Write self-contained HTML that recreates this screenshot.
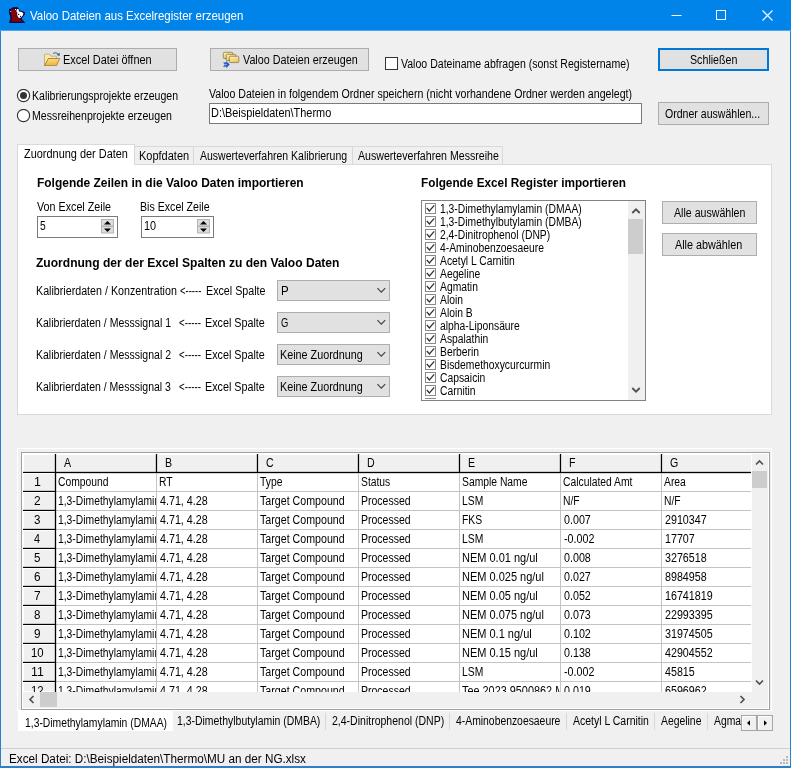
<!DOCTYPE html>
<html lang="de"><head><meta charset="utf-8"><title>Valoo Dateien aus Excelregister erzeugen</title>
<style>
html,body{margin:0;padding:0;}
body{width:791px;height:768px;overflow:hidden;background:#f0f0f0;font-family:"Liberation Sans",sans-serif;color:#000;position:relative;}
#w div,#w span.t,#w svg{position:absolute;box-sizing:border-box;}
#w{position:absolute;left:0;top:0;width:791px;height:768px;overflow:hidden;will-change:transform;}
span.t{white-space:pre;transform-origin:0 0;display:block;}
.btn{background:#e1e1e1;border:1px solid #adadad;}
</style></head><body><div id="w">
<div style="left:0px;top:0px;width:791px;height:30px;background:#0084ea;"></div>
<div style="left:0px;top:30px;width:791px;height:1px;background:#4fa5ee;"></div>
<div style="left:0px;top:31px;width:1px;height:737px;background:#2b80c8;"></div>
<div style="left:790px;top:31px;width:1px;height:737px;background:#2b80c8;"></div>
<div style="left:0px;top:766px;width:791px;height:2px;background:#2b80c8;"></div>
<svg style="left:9px;top:7px" width="16" height="16" viewBox="0 0 16 16">
<path d="M3.8 0.2 L8.2 0.1 L9.8 1.4 L10.4 2.8 L12 3.7 L14.2 4.2 L16 5.3 L15.8 7.6 L14.2 9.4 L12.8 11.6 L13.2 12.4 L16 15.4 L16 16 L0 16 L0 15 L1.3 12.4 L1.3 9.6 L0 6.2 L0 2 L1.8 1.8 L2.8 0.9 Z" fill="#0b0b4a"/>
<path d="M1.9 3 L3.8 2 L6.8 1.9 L7.8 4 L7.8 9 L9.3 11 L11.4 11.8 L11.8 13 L13.4 14.8 L1.9 14.8 L2.9 12.5 L2.9 9 L1.6 6 Z" fill="#820404"/>
<path d="M8 2 L9.5 2 L10 4.5 L13 5 L14.3 6.5 L14 8 L12.6 10 L11 11 L9.2 10.5 L8.2 8 L8.2 5 L7.2 4.4 Z" fill="#fff"/>
<circle cx="9.6" cy="7.4" r="0.65" fill="#111"/><circle cx="11.6" cy="9.4" r="0.65" fill="#111"/>
<rect x="6" y="2" width="1" height="1" fill="#fff"/><rect x="1.2" y="4" width="1" height="1" fill="#f4d0d0"/>
</svg>
<svg style="left:660px;top:0" width="130" height="31" viewBox="0 0 130 31" fill="none" stroke="#fff" stroke-width="1">
<path d="M11.5 15.5 H21.5"/>
<rect x="56.5" y="10.5" width="9" height="9"/>
<path d="M102.5 10.5 L112.5 20.5 M112.5 10.5 L102.5 20.5" stroke-width="1.1"/>
</svg>
<div class="btn" style="left:18px;top:48px;width:159px;height:23px"></div>
<svg style="left:44px;top:52px" width="16" height="14" viewBox="0 0 16 14">
<defs><linearGradient id="gf" x1="0" y1="0" x2="0.3" y2="1"><stop offset="0" stop-color="#fbe391"/><stop offset="1" stop-color="#f2b535"/></linearGradient></defs>
<path d="M0.5 13.2 V3 Q0.5 2.2 1.3 2.2 H5.2 Q5.8 2.2 6.2 2.8 L7 4.2 H11.8 Q12.5 4.2 12.5 5 V6.6 H4.5 L0.8 13.3 Z" fill="#fae9a8" stroke="#b89c58" stroke-width="0.7"/>
<path d="M4.4 6.5 H15.7 L12.5 13.6 H0.6 Z" fill="url(#gf)" stroke="#8f6b26" stroke-width="0.7"/>
<path d="M9.2 1.7 Q11.6 -0.5 14.2 2.2" fill="none" stroke="#44679d" stroke-width="1.1"/>
<path d="M15.9 0.8 L15.6 4 L12.6 2.9 Z" fill="#3f5f94"/>
</svg>
<div class="btn" style="left:210px;top:48px;width:159px;height:23px"></div>
<svg style="left:222px;top:51px" width="18" height="18" viewBox="0 0 18 18">
<defs><linearGradient id="gc" x1="0" y1="0" x2="0.4" y2="1"><stop offset="0" stop-color="#fdf2bd"/><stop offset="1" stop-color="#e6c96e"/></linearGradient></defs>
<g fill="url(#gc)" stroke="#8f7533" stroke-width="0.8">
<rect x="1.3" y="1.3" width="9.4" height="6.2" rx="1"/><rect x="4.2" y="3.3" width="9.6" height="6.2" rx="1"/><rect x="7.4" y="5.2" width="9.4" height="6.4" rx="1"/></g>
<path d="M1 11.2 L4.2 11.6 L4.2 10 L7.8 13.6 L4.2 17.2 L4.2 15.6 L1 16 L2.8 13.6 Z" fill="#2c5cc5"/>
<path d="M3 13 L5.5 13.6 L3 14.4 Z" fill="#8fb4f5"/>
</svg>
<div style="left:385px;top:57px;width:13px;height:13px;background:#fff;border:1px solid #333;"></div>
<div style="left:658px;top:48px;width:111px;height:23px;background:#e1e1e1;border:2px solid #0078d7;"></div>
<svg style="left:16px;top:89px" width="15" height="15" viewBox="0 0 15 15"><circle cx="7.5" cy="6.5" r="6.1" fill="#fff" stroke="#333" stroke-width="1.15"/><circle cx="7.5" cy="6.5" r="3.5" fill="#333"/></svg>
<svg style="left:16px;top:109px" width="15" height="15" viewBox="0 0 15 15"><circle cx="7.5" cy="6.5" r="6.1" fill="#fff" stroke="#333" stroke-width="1.15"/></svg>
<div style="left:209px;top:103px;width:433px;height:21px;background:#fff;border:1px solid #7a7a7a;"></div>
<div class="btn" style="left:658px;top:102px;width:111px;height:23px"></div>
<div style="left:17px;top:164px;width:755px;height:251px;background:#fff;border:1px solid #d9d9d9;"></div>
<div style="left:133px;top:146px;width:61px;height:19px;background:#f0f0f0;border:1px solid #d9d9d9;"></div>
<div style="left:193px;top:146px;width:160px;height:19px;background:#f0f0f0;border:1px solid #d9d9d9;"></div>
<div style="left:352px;top:146px;width:151px;height:19px;background:#f0f0f0;border:1px solid #d9d9d9;"></div>
<div style="left:17px;top:144px;width:118px;height:21px;background:#fff;border:1px solid #d9d9d9;border-bottom:none;"></div>
<div style="left:37px;top:216px;width:81px;height:22px;background:#fff;border:1px solid #7a7a7a;"></div>
<svg style="left:101px;top:219px" width="13" height="15" viewBox="0 0 13 15">
<rect x="0.5" y="0.5" width="12" height="6.5" fill="#ddd" stroke="#b4b4b4"/>
<rect x="0.5" y="7.5" width="12" height="6.5" fill="#ddd" stroke="#b4b4b4"/>
<path d="M3 5.6 L6.5 2 L10 5.6 Z" fill="#000"/><path d="M3 9.4 L6.5 13 L10 9.4 Z" fill="#000"/></svg>
<div style="left:141px;top:216px;width:73px;height:22px;background:#fff;border:1px solid #7a7a7a;"></div>
<svg style="left:197px;top:219px" width="13" height="15" viewBox="0 0 13 15">
<rect x="0.5" y="0.5" width="12" height="6.5" fill="#ddd" stroke="#b4b4b4"/>
<rect x="0.5" y="7.5" width="12" height="6.5" fill="#ddd" stroke="#b4b4b4"/>
<path d="M3 5.6 L6.5 2 L10 5.6 Z" fill="#000"/><path d="M3 9.4 L6.5 13 L10 9.4 Z" fill="#000"/></svg>
<div style="left:277px;top:280px;width:113px;height:21px;background:#e1e1e1;border:1px solid #adadad;"></div>
<svg style="left:376px;top:287px" width="11" height="7" viewBox="0 0 11 7"><path d="M1.4 1.2 L5.3 5.2 L9.2 1.2" fill="none" stroke="#404040" stroke-width="1.15"/></svg>
<div style="left:277px;top:312px;width:113px;height:21px;background:#e1e1e1;border:1px solid #adadad;"></div>
<svg style="left:376px;top:319px" width="11" height="7" viewBox="0 0 11 7"><path d="M1.4 1.2 L5.3 5.2 L9.2 1.2" fill="none" stroke="#404040" stroke-width="1.15"/></svg>
<div style="left:277px;top:344px;width:113px;height:21px;background:#e1e1e1;border:1px solid #adadad;"></div>
<svg style="left:376px;top:351px" width="11" height="7" viewBox="0 0 11 7"><path d="M1.4 1.2 L5.3 5.2 L9.2 1.2" fill="none" stroke="#404040" stroke-width="1.15"/></svg>
<div style="left:277px;top:376px;width:113px;height:21px;background:#e1e1e1;border:1px solid #adadad;"></div>
<svg style="left:376px;top:383px" width="11" height="7" viewBox="0 0 11 7"><path d="M1.4 1.2 L5.3 5.2 L9.2 1.2" fill="none" stroke="#404040" stroke-width="1.15"/></svg>
<div style="left:421px;top:200px;width:225px;height:201px;background:#fff;border:1px solid #828282;"></div>
<svg style="left:425px;top:203px" width="11" height="11" viewBox="0 0 11 11"><rect x="0.5" y="0.5" width="10" height="10" fill="#fff" stroke="#8a8a8a"/><path d="M1.8 5 L4.4 7.9 L9.2 2.4" fill="none" stroke="#333" stroke-width="1.3"/></svg>
<svg style="left:425px;top:216px" width="11" height="11" viewBox="0 0 11 11"><rect x="0.5" y="0.5" width="10" height="10" fill="#fff" stroke="#8a8a8a"/><path d="M1.8 5 L4.4 7.9 L9.2 2.4" fill="none" stroke="#333" stroke-width="1.3"/></svg>
<svg style="left:425px;top:229px" width="11" height="11" viewBox="0 0 11 11"><rect x="0.5" y="0.5" width="10" height="10" fill="#fff" stroke="#8a8a8a"/><path d="M1.8 5 L4.4 7.9 L9.2 2.4" fill="none" stroke="#333" stroke-width="1.3"/></svg>
<svg style="left:425px;top:242px" width="11" height="11" viewBox="0 0 11 11"><rect x="0.5" y="0.5" width="10" height="10" fill="#fff" stroke="#8a8a8a"/><path d="M1.8 5 L4.4 7.9 L9.2 2.4" fill="none" stroke="#333" stroke-width="1.3"/></svg>
<svg style="left:425px;top:255px" width="11" height="11" viewBox="0 0 11 11"><rect x="0.5" y="0.5" width="10" height="10" fill="#fff" stroke="#8a8a8a"/><path d="M1.8 5 L4.4 7.9 L9.2 2.4" fill="none" stroke="#333" stroke-width="1.3"/></svg>
<svg style="left:425px;top:268px" width="11" height="11" viewBox="0 0 11 11"><rect x="0.5" y="0.5" width="10" height="10" fill="#fff" stroke="#8a8a8a"/><path d="M1.8 5 L4.4 7.9 L9.2 2.4" fill="none" stroke="#333" stroke-width="1.3"/></svg>
<svg style="left:425px;top:281px" width="11" height="11" viewBox="0 0 11 11"><rect x="0.5" y="0.5" width="10" height="10" fill="#fff" stroke="#8a8a8a"/><path d="M1.8 5 L4.4 7.9 L9.2 2.4" fill="none" stroke="#333" stroke-width="1.3"/></svg>
<svg style="left:425px;top:294px" width="11" height="11" viewBox="0 0 11 11"><rect x="0.5" y="0.5" width="10" height="10" fill="#fff" stroke="#8a8a8a"/><path d="M1.8 5 L4.4 7.9 L9.2 2.4" fill="none" stroke="#333" stroke-width="1.3"/></svg>
<svg style="left:425px;top:307px" width="11" height="11" viewBox="0 0 11 11"><rect x="0.5" y="0.5" width="10" height="10" fill="#fff" stroke="#8a8a8a"/><path d="M1.8 5 L4.4 7.9 L9.2 2.4" fill="none" stroke="#333" stroke-width="1.3"/></svg>
<svg style="left:425px;top:320px" width="11" height="11" viewBox="0 0 11 11"><rect x="0.5" y="0.5" width="10" height="10" fill="#fff" stroke="#8a8a8a"/><path d="M1.8 5 L4.4 7.9 L9.2 2.4" fill="none" stroke="#333" stroke-width="1.3"/></svg>
<svg style="left:425px;top:333px" width="11" height="11" viewBox="0 0 11 11"><rect x="0.5" y="0.5" width="10" height="10" fill="#fff" stroke="#8a8a8a"/><path d="M1.8 5 L4.4 7.9 L9.2 2.4" fill="none" stroke="#333" stroke-width="1.3"/></svg>
<svg style="left:425px;top:346px" width="11" height="11" viewBox="0 0 11 11"><rect x="0.5" y="0.5" width="10" height="10" fill="#fff" stroke="#8a8a8a"/><path d="M1.8 5 L4.4 7.9 L9.2 2.4" fill="none" stroke="#333" stroke-width="1.3"/></svg>
<svg style="left:425px;top:359px" width="11" height="11" viewBox="0 0 11 11"><rect x="0.5" y="0.5" width="10" height="10" fill="#fff" stroke="#8a8a8a"/><path d="M1.8 5 L4.4 7.9 L9.2 2.4" fill="none" stroke="#333" stroke-width="1.3"/></svg>
<svg style="left:425px;top:372px" width="11" height="11" viewBox="0 0 11 11"><rect x="0.5" y="0.5" width="10" height="10" fill="#fff" stroke="#8a8a8a"/><path d="M1.8 5 L4.4 7.9 L9.2 2.4" fill="none" stroke="#333" stroke-width="1.3"/></svg>
<svg style="left:425px;top:385px" width="11" height="11" viewBox="0 0 11 11"><rect x="0.5" y="0.5" width="10" height="10" fill="#fff" stroke="#8a8a8a"/><path d="M1.8 5 L4.4 7.9 L9.2 2.4" fill="none" stroke="#333" stroke-width="1.3"/></svg>
<div style="left:425px;top:398px;width:11px;height:1px;background:#8a8a8a;"></div>
<div style="left:628px;top:201px;width:17px;height:199px;background:#f0f0f0;"></div>
<div style="left:628px;top:219px;width:15px;height:35px;background:#cdcdcd;"></div>
<svg style="left:631px;top:207px" width="10" height="8" viewBox="0 0 10 8"><path d="M1.3 6 L5 2.3 L8.7 6" fill="none" stroke="#505050" stroke-width="1.8"/></svg>
<svg style="left:631px;top:386px" width="10" height="8" viewBox="0 0 10 8"><path d="M1.3 2 L5 5.7 L8.7 2" fill="none" stroke="#505050" stroke-width="1.8"/></svg>
<div class="btn" style="left:662px;top:201px;width:95px;height:23px"></div>
<div class="btn" style="left:662px;top:233px;width:95px;height:23px"></div>
<div style="left:17px;top:448px;width:755px;height:263px;background:#f0f0f0;border:1px solid #fff;"></div>
<div style="left:21px;top:452px;width:749px;height:258px;background:#fff;border:1px solid #a0a0a0;"></div>
<div style="left:23px;top:454px;width:728px;height:18px;background:#f0f0f0;"></div>
<div style="left:23px;top:454px;width:32px;height:237px;background:#f0f0f0;"></div>
<div style="left:23px;top:454px;width:32px;height:1px;background:#fff;"></div>
<div style="left:23px;top:454px;width:1px;height:18px;background:#fff;"></div>
<div style="left:56px;top:454px;width:100px;height:1px;background:#fff;"></div>
<div style="left:56px;top:454px;width:1px;height:18px;background:#fff;"></div>
<div style="left:157px;top:454px;width:100px;height:1px;background:#fff;"></div>
<div style="left:157px;top:454px;width:1px;height:18px;background:#fff;"></div>
<div style="left:258px;top:454px;width:100px;height:1px;background:#fff;"></div>
<div style="left:258px;top:454px;width:1px;height:18px;background:#fff;"></div>
<div style="left:359px;top:454px;width:100px;height:1px;background:#fff;"></div>
<div style="left:359px;top:454px;width:1px;height:18px;background:#fff;"></div>
<div style="left:460px;top:454px;width:100px;height:1px;background:#fff;"></div>
<div style="left:460px;top:454px;width:1px;height:18px;background:#fff;"></div>
<div style="left:561px;top:454px;width:100px;height:1px;background:#fff;"></div>
<div style="left:561px;top:454px;width:1px;height:18px;background:#fff;"></div>
<div style="left:662px;top:454px;width:89px;height:1px;background:#fff;"></div>
<div style="left:662px;top:454px;width:1px;height:18px;background:#fff;"></div>
<div style="left:54px;top:454px;width:3px;height:19px;background:rgba(0,0,0,0.16);"></div>
<div style="left:55px;top:454px;width:1px;height:19px;background:#000;"></div>
<div style="left:155px;top:454px;width:3px;height:19px;background:rgba(0,0,0,0.16);"></div>
<div style="left:156px;top:454px;width:1px;height:19px;background:#000;"></div>
<div style="left:256px;top:454px;width:3px;height:19px;background:rgba(0,0,0,0.16);"></div>
<div style="left:257px;top:454px;width:1px;height:19px;background:#000;"></div>
<div style="left:357px;top:454px;width:3px;height:19px;background:rgba(0,0,0,0.16);"></div>
<div style="left:358px;top:454px;width:1px;height:19px;background:#000;"></div>
<div style="left:458px;top:454px;width:3px;height:19px;background:rgba(0,0,0,0.16);"></div>
<div style="left:459px;top:454px;width:1px;height:19px;background:#000;"></div>
<div style="left:559px;top:454px;width:3px;height:19px;background:rgba(0,0,0,0.16);"></div>
<div style="left:560px;top:454px;width:1px;height:19px;background:#000;"></div>
<div style="left:660px;top:454px;width:3px;height:19px;background:rgba(0,0,0,0.16);"></div>
<div style="left:661px;top:454px;width:1px;height:19px;background:#000;"></div>
<div style="left:23px;top:471px;width:728px;height:3px;background:rgba(0,0,0,0.16);"></div>
<div style="left:23px;top:472px;width:728px;height:1px;background:#000;"></div>
<div style="left:23px;top:473px;width:32px;height:1px;background:#fff;"></div>
<div style="left:23px;top:473px;width:1px;height:18px;background:#fff;"></div>
<div style="left:56px;top:491px;width:695px;height:1px;background:#c4c4c4;"></div>
<div style="left:23px;top:490px;width:33px;height:3px;background:rgba(0,0,0,0.16);"></div>
<div style="left:23px;top:491px;width:33px;height:1px;background:#000;"></div>
<div style="left:23px;top:492px;width:32px;height:1px;background:#fff;"></div>
<div style="left:23px;top:492px;width:1px;height:18px;background:#fff;"></div>
<div style="left:56px;top:510px;width:695px;height:1px;background:#c4c4c4;"></div>
<div style="left:23px;top:509px;width:33px;height:3px;background:rgba(0,0,0,0.16);"></div>
<div style="left:23px;top:510px;width:33px;height:1px;background:#000;"></div>
<div style="left:23px;top:511px;width:32px;height:1px;background:#fff;"></div>
<div style="left:23px;top:511px;width:1px;height:18px;background:#fff;"></div>
<div style="left:56px;top:529px;width:695px;height:1px;background:#c4c4c4;"></div>
<div style="left:23px;top:528px;width:33px;height:3px;background:rgba(0,0,0,0.16);"></div>
<div style="left:23px;top:529px;width:33px;height:1px;background:#000;"></div>
<div style="left:23px;top:530px;width:32px;height:1px;background:#fff;"></div>
<div style="left:23px;top:530px;width:1px;height:18px;background:#fff;"></div>
<div style="left:56px;top:548px;width:695px;height:1px;background:#c4c4c4;"></div>
<div style="left:23px;top:547px;width:33px;height:3px;background:rgba(0,0,0,0.16);"></div>
<div style="left:23px;top:548px;width:33px;height:1px;background:#000;"></div>
<div style="left:23px;top:549px;width:32px;height:1px;background:#fff;"></div>
<div style="left:23px;top:549px;width:1px;height:18px;background:#fff;"></div>
<div style="left:56px;top:567px;width:695px;height:1px;background:#c4c4c4;"></div>
<div style="left:23px;top:566px;width:33px;height:3px;background:rgba(0,0,0,0.16);"></div>
<div style="left:23px;top:567px;width:33px;height:1px;background:#000;"></div>
<div style="left:23px;top:568px;width:32px;height:1px;background:#fff;"></div>
<div style="left:23px;top:568px;width:1px;height:18px;background:#fff;"></div>
<div style="left:56px;top:586px;width:695px;height:1px;background:#c4c4c4;"></div>
<div style="left:23px;top:585px;width:33px;height:3px;background:rgba(0,0,0,0.16);"></div>
<div style="left:23px;top:586px;width:33px;height:1px;background:#000;"></div>
<div style="left:23px;top:587px;width:32px;height:1px;background:#fff;"></div>
<div style="left:23px;top:587px;width:1px;height:18px;background:#fff;"></div>
<div style="left:56px;top:605px;width:695px;height:1px;background:#c4c4c4;"></div>
<div style="left:23px;top:604px;width:33px;height:3px;background:rgba(0,0,0,0.16);"></div>
<div style="left:23px;top:605px;width:33px;height:1px;background:#000;"></div>
<div style="left:23px;top:606px;width:32px;height:1px;background:#fff;"></div>
<div style="left:23px;top:606px;width:1px;height:18px;background:#fff;"></div>
<div style="left:56px;top:624px;width:695px;height:1px;background:#c4c4c4;"></div>
<div style="left:23px;top:623px;width:33px;height:3px;background:rgba(0,0,0,0.16);"></div>
<div style="left:23px;top:624px;width:33px;height:1px;background:#000;"></div>
<div style="left:23px;top:625px;width:32px;height:1px;background:#fff;"></div>
<div style="left:23px;top:625px;width:1px;height:18px;background:#fff;"></div>
<div style="left:56px;top:643px;width:695px;height:1px;background:#c4c4c4;"></div>
<div style="left:23px;top:642px;width:33px;height:3px;background:rgba(0,0,0,0.16);"></div>
<div style="left:23px;top:643px;width:33px;height:1px;background:#000;"></div>
<div style="left:23px;top:644px;width:32px;height:1px;background:#fff;"></div>
<div style="left:23px;top:644px;width:1px;height:18px;background:#fff;"></div>
<div style="left:56px;top:662px;width:695px;height:1px;background:#c4c4c4;"></div>
<div style="left:23px;top:661px;width:33px;height:3px;background:rgba(0,0,0,0.16);"></div>
<div style="left:23px;top:662px;width:33px;height:1px;background:#000;"></div>
<div style="left:23px;top:663px;width:32px;height:1px;background:#fff;"></div>
<div style="left:23px;top:663px;width:1px;height:18px;background:#fff;"></div>
<div style="left:56px;top:681px;width:695px;height:1px;background:#c4c4c4;"></div>
<div style="left:23px;top:680px;width:33px;height:3px;background:rgba(0,0,0,0.16);"></div>
<div style="left:23px;top:681px;width:33px;height:1px;background:#000;"></div>
<div style="left:23px;top:682px;width:32px;height:1px;background:#fff;"></div>
<div style="left:23px;top:682px;width:1px;height:10px;background:#fff;"></div>
<div style="left:54px;top:473px;width:3px;height:219px;background:rgba(0,0,0,0.16);"></div>
<div style="left:55px;top:473px;width:1px;height:219px;background:#000;"></div>
<div style="left:156px;top:473px;width:1px;height:219px;background:#c4c4c4;"></div>
<div style="left:257px;top:473px;width:1px;height:219px;background:#c4c4c4;"></div>
<div style="left:358px;top:473px;width:1px;height:219px;background:#c4c4c4;"></div>
<div style="left:459px;top:473px;width:1px;height:219px;background:#c4c4c4;"></div>
<div style="left:560px;top:473px;width:1px;height:219px;background:#c4c4c4;"></div>
<div style="left:661px;top:473px;width:1px;height:219px;background:#c4c4c4;"></div>
<div style="left:752px;top:454px;width:16px;height:238px;background:#f0f0f0;"></div>
<div style="left:752px;top:471px;width:15px;height:17px;background:#cdcdcd;"></div>
<svg style="left:755px;top:459px" width="9" height="7" viewBox="0 0 9 7"><path d="M1 5.5 L4.5 2 L8 5.5" fill="none" stroke="#505050" stroke-width="1.7"/></svg>
<svg style="left:755px;top:679px" width="9" height="7" viewBox="0 0 9 7"><path d="M1 1.5 L4.5 5 L8 1.5" fill="none" stroke="#505050" stroke-width="1.7"/></svg>
<div style="left:23px;top:692px;width:745px;height:16px;background:#f0f0f0;"></div>
<div style="left:40px;top:692px;width:17px;height:15px;background:#cdcdcd;"></div>
<svg style="left:28px;top:695px" width="7" height="9" viewBox="0 0 7 9"><path d="M5.5 1 L2 4.5 L5.5 8" fill="none" stroke="#505050" stroke-width="1.7"/></svg>
<svg style="left:739px;top:695px" width="7" height="9" viewBox="0 0 7 9"><path d="M1.5 1 L5 4.5 L1.5 8" fill="none" stroke="#505050" stroke-width="1.7"/></svg>
<div style="left:18px;top:711px;width:155px;height:20px;background:#fff;"></div>
<div style="left:325px;top:713px;width:1px;height:17px;background:#d9d9d9;"></div>
<div style="left:449px;top:713px;width:1px;height:17px;background:#d9d9d9;"></div>
<div style="left:566px;top:713px;width:1px;height:17px;background:#d9d9d9;"></div>
<div style="left:654px;top:713px;width:1px;height:17px;background:#d9d9d9;"></div>
<div style="left:707px;top:713px;width:1px;height:17px;background:#d9d9d9;"></div>
<svg style="left:741px;top:715px" width="16" height="16" viewBox="0 0 16 16"><rect x="0.5" y="0.5" width="15" height="15" fill="#f0f0f0" stroke="#a6a6a6"/><path d="M1.5 14 V1.5 H14" fill="none" stroke="#fff"/><path d="M9 5.2 L6 8 L9 10.8 Z" fill="#000"/></svg>
<svg style="left:757px;top:715px" width="16" height="16" viewBox="0 0 16 16"><rect x="0.5" y="0.5" width="15" height="15" fill="#f0f0f0" stroke="#a6a6a6"/><path d="M1.5 14 V1.5 H14" fill="none" stroke="#fff"/><path d="M7 5.2 L10 8 L7 10.8 Z" fill="#000"/></svg>
<div style="left:1px;top:748px;width:789px;height:1px;background:#d0d0d0;"></div>
<svg style="left:777px;top:755px" width="12" height="12" viewBox="0 0 12 12" fill="#b8b8b8"><rect x="9" y="1" width="2" height="2"/><rect x="6" y="4" width="2" height="2"/><rect x="9" y="4" width="2" height="2"/><rect x="3" y="7" width="2" height="2"/><rect x="6" y="7" width="2" height="2"/><rect x="9" y="7" width="2" height="2"/></svg>
<span class="t" style="left:29.60px;top:9px;font-size:12px;line-height:14px;transform:scaleX(0.9557);color:#fff;">Valoo Dateien aus Excelregister erzeugen</span>
<span class="t" style="left:63.32px;top:53px;font-size:12.5px;line-height:14px;transform:scaleX(0.8758);">Excel Datei öffnen</span>
<span class="t" style="left:242.61px;top:53px;font-size:12.5px;line-height:14px;transform:scaleX(0.8605);">Valoo Dateien erzeugen</span>
<span class="t" style="left:400.92px;top:57px;font-size:12.5px;line-height:14px;transform:scaleX(0.8442);">Valoo Dateiname abfragen (sonst Registername)</span>
<span class="t" style="left:689.59px;top:53px;font-size:12.5px;line-height:14px;transform:scaleX(0.8533);">Schließen</span>
<span class="t" style="left:32.46px;top:89px;font-size:12.5px;line-height:14px;transform:scaleX(0.8438);">Kalibrierungsprojekte erzeugen</span>
<span class="t" style="left:32.45px;top:109px;font-size:12.5px;line-height:14px;transform:scaleX(0.8499);">Messreihenprojekte erzeugen</span>
<span class="t" style="left:209.22px;top:87px;font-size:12.5px;line-height:14px;transform:scaleX(0.8484);">Valoo Dateien in folgendem Ordner speichern (nicht vorhandene Ordner werden angelegt)</span>
<span class="t" style="left:211.43px;top:106px;font-size:12.5px;line-height:14px;transform:scaleX(0.8740);">D:\Beispieldaten\Thermo</span>
<span class="t" style="left:665.49px;top:107px;font-size:12.5px;line-height:14px;transform:scaleX(0.8452);">Ordner auswählen...</span>
<span class="t" style="left:24.25px;top:147px;font-size:12.5px;line-height:14px;transform:scaleX(0.8746);">Zuordnung der Daten</span>
<span class="t" style="left:139.22px;top:149px;font-size:12.5px;line-height:14px;transform:scaleX(0.8795);">Kopfdaten</span>
<span class="t" style="left:200.20px;top:149px;font-size:12.5px;line-height:14px;transform:scaleX(0.8402);">Auswerteverfahren Kalibrierung</span>
<span class="t" style="left:357.90px;top:149px;font-size:12.5px;line-height:14px;transform:scaleX(0.8480);">Auswerteverfahren Messreihe</span>
<span class="t" style="left:36.93px;top:176px;font-size:12.5px;line-height:14px;transform:scaleX(0.9572);font-weight:bold;">Folgende Zeilen in die Valoo Daten importieren</span>
<span class="t" style="left:420.55px;top:176px;font-size:12.5px;line-height:14px;transform:scaleX(0.9428);font-weight:bold;">Folgende Excel Register importieren</span>
<span class="t" style="left:37.01px;top:200px;font-size:12.5px;line-height:14px;transform:scaleX(0.8591);">Von Excel Zeile</span>
<span class="t" style="left:140.25px;top:200px;font-size:12.5px;line-height:14px;transform:scaleX(0.8489);">Bis Excel Zeile</span>
<span class="t" style="left:40.29px;top:219px;font-size:12.5px;line-height:14px;transform:scaleX(0.8220);">5</span>
<span class="t" style="left:143.92px;top:219px;font-size:12.5px;line-height:14px;transform:scaleX(0.8680);">10</span>
<span class="t" style="left:36.31px;top:256px;font-size:12.5px;line-height:14px;transform:scaleX(0.9644);font-weight:bold;">Zuordnung der der Excel Spalten zu den Valoo Daten</span>
<span class="t" style="left:36.24px;top:284px;font-size:12.5px;line-height:14px;transform:scaleX(0.8554);">Kalibrierdaten / Konzentration</span>
<span class="t" style="left:179.85px;top:284px;font-size:12.5px;line-height:14px;transform:scaleX(0.7574);">&lt;-----</span>
<span class="t" style="left:206.44px;top:284px;font-size:12.5px;line-height:14px;transform:scaleX(0.8564);">Excel Spalte</span>
<span class="t" style="left:280.78px;top:284px;font-size:12.5px;line-height:14px;transform:scaleX(0.9179);">P</span>
<span class="t" style="left:36.26px;top:316px;font-size:12.5px;line-height:14px;transform:scaleX(0.8411);">Kalibrierdaten / Messsignal 1</span>
<span class="t" style="left:178.73px;top:316px;font-size:12.5px;line-height:14px;transform:scaleX(0.7796);">&lt;-----</span>
<span class="t" style="left:205.14px;top:316px;font-size:12.5px;line-height:14px;transform:scaleX(0.8608);">Excel Spalte</span>
<span class="t" style="left:281.25px;top:316px;font-size:12.5px;line-height:14px;transform:scaleX(0.7500);">G</span>
<span class="t" style="left:36.26px;top:348px;font-size:12.5px;line-height:14px;transform:scaleX(0.8411);">Kalibrierdaten / Messsignal 2</span>
<span class="t" style="left:178.73px;top:348px;font-size:12.5px;line-height:14px;transform:scaleX(0.7796);">&lt;-----</span>
<span class="t" style="left:205.14px;top:348px;font-size:12.5px;line-height:14px;transform:scaleX(0.8608);">Excel Spalte</span>
<span class="t" style="left:280.24px;top:348px;font-size:12.5px;line-height:14px;transform:scaleX(0.8624);">Keine Zuordnung</span>
<span class="t" style="left:36.26px;top:380px;font-size:12.5px;line-height:14px;transform:scaleX(0.8406);">Kalibrierdaten / Messsignal 3</span>
<span class="t" style="left:178.73px;top:380px;font-size:12.5px;line-height:14px;transform:scaleX(0.7796);">&lt;-----</span>
<span class="t" style="left:205.14px;top:380px;font-size:12.5px;line-height:14px;transform:scaleX(0.8608);">Excel Spalte</span>
<span class="t" style="left:280.24px;top:380px;font-size:12.5px;line-height:14px;transform:scaleX(0.8624);">Keine Zuordnung</span>
<span class="t" style="left:439.60px;top:202px;font-size:12.5px;line-height:14px;transform:scaleX(0.8260);">1,3-Dimethylamylamin (DMAA)</span>
<span class="t" style="left:439.60px;top:215px;font-size:12.5px;line-height:14px;transform:scaleX(0.8260);">1,3-Dimethylbutylamin (DMBA)</span>
<span class="t" style="left:439.60px;top:228px;font-size:12.5px;line-height:14px;transform:scaleX(0.8260);">2,4-Dinitrophenol (DNP)</span>
<span class="t" style="left:439.60px;top:241px;font-size:12.5px;line-height:14px;transform:scaleX(0.8260);">4-Aminobenzoesaeure</span>
<span class="t" style="left:439.60px;top:254px;font-size:12.5px;line-height:14px;transform:scaleX(0.8260);">Acetyl L Carnitin</span>
<span class="t" style="left:439.60px;top:267px;font-size:12.5px;line-height:14px;transform:scaleX(0.8260);">Aegeline</span>
<span class="t" style="left:439.60px;top:280px;font-size:12.5px;line-height:14px;transform:scaleX(0.8260);">Agmatin</span>
<span class="t" style="left:439.60px;top:293px;font-size:12.5px;line-height:14px;transform:scaleX(0.8260);">Aloin</span>
<span class="t" style="left:439.60px;top:306px;font-size:12.5px;line-height:14px;transform:scaleX(0.8260);">Aloin B</span>
<span class="t" style="left:439.60px;top:319px;font-size:12.5px;line-height:14px;transform:scaleX(0.8260);">alpha-Liponsäure</span>
<span class="t" style="left:439.60px;top:332px;font-size:12.5px;line-height:14px;transform:scaleX(0.8260);">Aspalathin</span>
<span class="t" style="left:439.60px;top:345px;font-size:12.5px;line-height:14px;transform:scaleX(0.8260);">Berberin</span>
<span class="t" style="left:439.60px;top:358px;font-size:12.5px;line-height:14px;transform:scaleX(0.8260);">Bisdemethoxycurcurmin</span>
<span class="t" style="left:439.60px;top:371px;font-size:12.5px;line-height:14px;transform:scaleX(0.8260);">Capsaicin</span>
<span class="t" style="left:439.60px;top:384px;font-size:12.5px;line-height:14px;transform:scaleX(0.8260);">Carnitin</span>
<span class="t" style="left:673.70px;top:206px;font-size:12.5px;line-height:14px;transform:scaleX(0.8493);">Alle auswählen</span>
<span class="t" style="left:675.40px;top:238px;font-size:12.5px;line-height:14px;transform:scaleX(0.8643);">Alle abwählen</span>
<span class="t" style="left:64.00px;top:456px;font-size:12.5px;line-height:14px;transform:scaleX(0.8500);">A</span>
<span class="t" style="left:165.00px;top:456px;font-size:12.5px;line-height:14px;transform:scaleX(0.8500);">B</span>
<span class="t" style="left:266.00px;top:456px;font-size:12.5px;line-height:14px;transform:scaleX(0.8500);">C</span>
<span class="t" style="left:367.00px;top:456px;font-size:12.5px;line-height:14px;transform:scaleX(0.8500);">D</span>
<span class="t" style="left:468.00px;top:456px;font-size:12.5px;line-height:14px;transform:scaleX(0.8500);">E</span>
<span class="t" style="left:569.00px;top:456px;font-size:12.5px;line-height:14px;transform:scaleX(0.8500);">F</span>
<span class="t" style="left:670.00px;top:456px;font-size:12.5px;line-height:14px;transform:scaleX(0.8500);">G</span>
<span class="t" style="left:33.86px;top:475px;font-size:12.5px;line-height:14px;transform:scaleX(0.9909);">1</span>
<div style="left:56px;top:473px;width:100px;height:18px;overflow:hidden"><span class="t" style="left:2.00px;top:2px;font-size:12.5px;line-height:14px;transform:scaleX(0.8260);">Compound</span></div>
<div style="left:157px;top:473px;width:100px;height:18px;overflow:hidden"><span class="t" style="left:2.00px;top:2px;font-size:12.5px;line-height:14px;transform:scaleX(0.8260);">RT</span></div>
<div style="left:258px;top:473px;width:100px;height:18px;overflow:hidden"><span class="t" style="left:2.00px;top:2px;font-size:12.5px;line-height:14px;transform:scaleX(0.8260);">Type</span></div>
<div style="left:359px;top:473px;width:100px;height:18px;overflow:hidden"><span class="t" style="left:2.00px;top:2px;font-size:12.5px;line-height:14px;transform:scaleX(0.8260);">Status</span></div>
<div style="left:460px;top:473px;width:100px;height:18px;overflow:hidden"><span class="t" style="left:2.00px;top:2px;font-size:12.5px;line-height:14px;transform:scaleX(0.8260);">Sample Name</span></div>
<div style="left:561px;top:473px;width:100px;height:18px;overflow:hidden"><span class="t" style="left:2.00px;top:2px;font-size:12.5px;line-height:14px;transform:scaleX(0.8260);">Calculated Amt</span></div>
<div style="left:662px;top:473px;width:89px;height:18px;overflow:hidden"><span class="t" style="left:2.00px;top:2px;font-size:12.5px;line-height:14px;transform:scaleX(0.8260);">Area</span></div>
<span class="t" style="left:34.18px;top:494px;font-size:12.5px;line-height:14px;transform:scaleX(0.9561);">2</span>
<div style="left:56px;top:492px;width:100px;height:18px;overflow:hidden"><span class="t" style="left:2.00px;top:2px;font-size:12.5px;line-height:14px;transform:scaleX(0.8260);">1,3-Dimethylamylamin (DMAA)</span></div>
<div style="left:157px;top:492px;width:100px;height:18px;overflow:hidden"><span class="t" style="left:2.60px;top:2px;font-size:12.5px;line-height:14px;transform:scaleX(0.8570);">4.71, 4.28</span></div>
<div style="left:258px;top:492px;width:100px;height:18px;overflow:hidden"><span class="t" style="left:2.00px;top:2px;font-size:12.5px;line-height:14px;transform:scaleX(0.8520);">Target Compound</span></div>
<div style="left:359px;top:492px;width:100px;height:18px;overflow:hidden"><span class="t" style="left:2.00px;top:2px;font-size:12.5px;line-height:14px;transform:scaleX(0.8400);">Processed</span></div>
<div style="left:460px;top:492px;width:100px;height:18px;overflow:hidden"><span class="t" style="left:2.00px;top:2px;font-size:12.5px;line-height:14px;transform:scaleX(0.8260);">LSM</span></div>
<div style="left:561px;top:492px;width:100px;height:18px;overflow:hidden"><span class="t" style="left:2.00px;top:2px;font-size:12.5px;line-height:14px;transform:scaleX(0.8260);">N/F</span></div>
<div style="left:662px;top:492px;width:89px;height:18px;overflow:hidden"><span class="t" style="left:2.00px;top:2px;font-size:12.5px;line-height:14px;transform:scaleX(0.8260);">N/F</span></div>
<span class="t" style="left:34.29px;top:513px;font-size:12.5px;line-height:14px;transform:scaleX(0.9237);">3</span>
<div style="left:56px;top:511px;width:100px;height:18px;overflow:hidden"><span class="t" style="left:2.00px;top:2px;font-size:12.5px;line-height:14px;transform:scaleX(0.8260);">1,3-Dimethylamylamin (DMAA)</span></div>
<div style="left:157px;top:511px;width:100px;height:18px;overflow:hidden"><span class="t" style="left:2.60px;top:2px;font-size:12.5px;line-height:14px;transform:scaleX(0.8570);">4.71, 4.28</span></div>
<div style="left:258px;top:511px;width:100px;height:18px;overflow:hidden"><span class="t" style="left:2.00px;top:2px;font-size:12.5px;line-height:14px;transform:scaleX(0.8520);">Target Compound</span></div>
<div style="left:359px;top:511px;width:100px;height:18px;overflow:hidden"><span class="t" style="left:2.00px;top:2px;font-size:12.5px;line-height:14px;transform:scaleX(0.8400);">Processed</span></div>
<div style="left:460px;top:511px;width:100px;height:18px;overflow:hidden"><span class="t" style="left:2.00px;top:2px;font-size:12.5px;line-height:14px;transform:scaleX(0.8260);">FKS</span></div>
<div style="left:561px;top:511px;width:100px;height:18px;overflow:hidden"><span class="t" style="left:2.60px;top:2px;font-size:12.5px;line-height:14px;transform:scaleX(0.8570);">0.007</span></div>
<div style="left:662px;top:511px;width:89px;height:18px;overflow:hidden"><span class="t" style="left:2.60px;top:2px;font-size:12.5px;line-height:14px;transform:scaleX(0.8570);">2910347</span></div>
<span class="t" style="left:34.49px;top:532px;font-size:12.5px;line-height:14px;transform:scaleX(0.8651);">4</span>
<div style="left:56px;top:530px;width:100px;height:18px;overflow:hidden"><span class="t" style="left:2.00px;top:2px;font-size:12.5px;line-height:14px;transform:scaleX(0.8260);">1,3-Dimethylamylamin (DMAA)</span></div>
<div style="left:157px;top:530px;width:100px;height:18px;overflow:hidden"><span class="t" style="left:2.60px;top:2px;font-size:12.5px;line-height:14px;transform:scaleX(0.8570);">4.71, 4.28</span></div>
<div style="left:258px;top:530px;width:100px;height:18px;overflow:hidden"><span class="t" style="left:2.00px;top:2px;font-size:12.5px;line-height:14px;transform:scaleX(0.8520);">Target Compound</span></div>
<div style="left:359px;top:530px;width:100px;height:18px;overflow:hidden"><span class="t" style="left:2.00px;top:2px;font-size:12.5px;line-height:14px;transform:scaleX(0.8400);">Processed</span></div>
<div style="left:460px;top:530px;width:100px;height:18px;overflow:hidden"><span class="t" style="left:2.00px;top:2px;font-size:12.5px;line-height:14px;transform:scaleX(0.8260);">LSM</span></div>
<div style="left:561px;top:530px;width:100px;height:18px;overflow:hidden"><span class="t" style="left:2.60px;top:2px;font-size:12.5px;line-height:14px;transform:scaleX(0.8570);">-0.002</span></div>
<div style="left:662px;top:530px;width:89px;height:18px;overflow:hidden"><span class="t" style="left:2.60px;top:2px;font-size:12.5px;line-height:14px;transform:scaleX(0.8570);">17707</span></div>
<span class="t" style="left:34.29px;top:551px;font-size:12.5px;line-height:14px;transform:scaleX(0.9237);">5</span>
<div style="left:56px;top:549px;width:100px;height:18px;overflow:hidden"><span class="t" style="left:2.00px;top:2px;font-size:12.5px;line-height:14px;transform:scaleX(0.8260);">1,3-Dimethylamylamin (DMAA)</span></div>
<div style="left:157px;top:549px;width:100px;height:18px;overflow:hidden"><span class="t" style="left:2.60px;top:2px;font-size:12.5px;line-height:14px;transform:scaleX(0.8570);">4.71, 4.28</span></div>
<div style="left:258px;top:549px;width:100px;height:18px;overflow:hidden"><span class="t" style="left:2.00px;top:2px;font-size:12.5px;line-height:14px;transform:scaleX(0.8520);">Target Compound</span></div>
<div style="left:359px;top:549px;width:100px;height:18px;overflow:hidden"><span class="t" style="left:2.00px;top:2px;font-size:12.5px;line-height:14px;transform:scaleX(0.8400);">Processed</span></div>
<div style="left:460px;top:549px;width:100px;height:18px;overflow:hidden"><span class="t" style="left:2.00px;top:2px;font-size:12.5px;line-height:14px;transform:scaleX(0.8800);">NEM 0.01 ng/ul</span></div>
<div style="left:561px;top:549px;width:100px;height:18px;overflow:hidden"><span class="t" style="left:2.60px;top:2px;font-size:12.5px;line-height:14px;transform:scaleX(0.8570);">0.008</span></div>
<div style="left:662px;top:549px;width:89px;height:18px;overflow:hidden"><span class="t" style="left:2.60px;top:2px;font-size:12.5px;line-height:14px;transform:scaleX(0.8570);">3276518</span></div>
<span class="t" style="left:34.19px;top:570px;font-size:12.5px;line-height:14px;transform:scaleX(0.9397);">6</span>
<div style="left:56px;top:568px;width:100px;height:18px;overflow:hidden"><span class="t" style="left:2.00px;top:2px;font-size:12.5px;line-height:14px;transform:scaleX(0.8260);">1,3-Dimethylamylamin (DMAA)</span></div>
<div style="left:157px;top:568px;width:100px;height:18px;overflow:hidden"><span class="t" style="left:2.60px;top:2px;font-size:12.5px;line-height:14px;transform:scaleX(0.8570);">4.71, 4.28</span></div>
<div style="left:258px;top:568px;width:100px;height:18px;overflow:hidden"><span class="t" style="left:2.00px;top:2px;font-size:12.5px;line-height:14px;transform:scaleX(0.8520);">Target Compound</span></div>
<div style="left:359px;top:568px;width:100px;height:18px;overflow:hidden"><span class="t" style="left:2.00px;top:2px;font-size:12.5px;line-height:14px;transform:scaleX(0.8400);">Processed</span></div>
<div style="left:460px;top:568px;width:100px;height:18px;overflow:hidden"><span class="t" style="left:2.00px;top:2px;font-size:12.5px;line-height:14px;transform:scaleX(0.8800);">NEM 0.025 ng/ul</span></div>
<div style="left:561px;top:568px;width:100px;height:18px;overflow:hidden"><span class="t" style="left:2.60px;top:2px;font-size:12.5px;line-height:14px;transform:scaleX(0.8570);">0.027</span></div>
<div style="left:662px;top:568px;width:89px;height:18px;overflow:hidden"><span class="t" style="left:2.60px;top:2px;font-size:12.5px;line-height:14px;transform:scaleX(0.8570);">8984958</span></div>
<span class="t" style="left:34.18px;top:589px;font-size:12.5px;line-height:14px;transform:scaleX(0.9561);">7</span>
<div style="left:56px;top:587px;width:100px;height:18px;overflow:hidden"><span class="t" style="left:2.00px;top:2px;font-size:12.5px;line-height:14px;transform:scaleX(0.8260);">1,3-Dimethylamylamin (DMAA)</span></div>
<div style="left:157px;top:587px;width:100px;height:18px;overflow:hidden"><span class="t" style="left:2.60px;top:2px;font-size:12.5px;line-height:14px;transform:scaleX(0.8570);">4.71, 4.28</span></div>
<div style="left:258px;top:587px;width:100px;height:18px;overflow:hidden"><span class="t" style="left:2.00px;top:2px;font-size:12.5px;line-height:14px;transform:scaleX(0.8520);">Target Compound</span></div>
<div style="left:359px;top:587px;width:100px;height:18px;overflow:hidden"><span class="t" style="left:2.00px;top:2px;font-size:12.5px;line-height:14px;transform:scaleX(0.8400);">Processed</span></div>
<div style="left:460px;top:587px;width:100px;height:18px;overflow:hidden"><span class="t" style="left:2.00px;top:2px;font-size:12.5px;line-height:14px;transform:scaleX(0.8800);">NEM 0.05 ng/ul</span></div>
<div style="left:561px;top:587px;width:100px;height:18px;overflow:hidden"><span class="t" style="left:2.60px;top:2px;font-size:12.5px;line-height:14px;transform:scaleX(0.8570);">0.052</span></div>
<div style="left:662px;top:587px;width:89px;height:18px;overflow:hidden"><span class="t" style="left:2.60px;top:2px;font-size:12.5px;line-height:14px;transform:scaleX(0.8570);">16741819</span></div>
<span class="t" style="left:34.29px;top:608px;font-size:12.5px;line-height:14px;transform:scaleX(0.9237);">8</span>
<div style="left:56px;top:606px;width:100px;height:18px;overflow:hidden"><span class="t" style="left:2.00px;top:2px;font-size:12.5px;line-height:14px;transform:scaleX(0.8260);">1,3-Dimethylamylamin (DMAA)</span></div>
<div style="left:157px;top:606px;width:100px;height:18px;overflow:hidden"><span class="t" style="left:2.60px;top:2px;font-size:12.5px;line-height:14px;transform:scaleX(0.8570);">4.71, 4.28</span></div>
<div style="left:258px;top:606px;width:100px;height:18px;overflow:hidden"><span class="t" style="left:2.00px;top:2px;font-size:12.5px;line-height:14px;transform:scaleX(0.8520);">Target Compound</span></div>
<div style="left:359px;top:606px;width:100px;height:18px;overflow:hidden"><span class="t" style="left:2.00px;top:2px;font-size:12.5px;line-height:14px;transform:scaleX(0.8400);">Processed</span></div>
<div style="left:460px;top:606px;width:100px;height:18px;overflow:hidden"><span class="t" style="left:2.00px;top:2px;font-size:12.5px;line-height:14px;transform:scaleX(0.8800);">NEM 0.075 ng/ul</span></div>
<div style="left:561px;top:606px;width:100px;height:18px;overflow:hidden"><span class="t" style="left:2.60px;top:2px;font-size:12.5px;line-height:14px;transform:scaleX(0.8570);">0.073</span></div>
<div style="left:662px;top:606px;width:89px;height:18px;overflow:hidden"><span class="t" style="left:2.60px;top:2px;font-size:12.5px;line-height:14px;transform:scaleX(0.8570);">22993395</span></div>
<span class="t" style="left:34.19px;top:627px;font-size:12.5px;line-height:14px;transform:scaleX(0.9397);">9</span>
<div style="left:56px;top:625px;width:100px;height:18px;overflow:hidden"><span class="t" style="left:2.00px;top:2px;font-size:12.5px;line-height:14px;transform:scaleX(0.8260);">1,3-Dimethylamylamin (DMAA)</span></div>
<div style="left:157px;top:625px;width:100px;height:18px;overflow:hidden"><span class="t" style="left:2.60px;top:2px;font-size:12.5px;line-height:14px;transform:scaleX(0.8570);">4.71, 4.28</span></div>
<div style="left:258px;top:625px;width:100px;height:18px;overflow:hidden"><span class="t" style="left:2.00px;top:2px;font-size:12.5px;line-height:14px;transform:scaleX(0.8520);">Target Compound</span></div>
<div style="left:359px;top:625px;width:100px;height:18px;overflow:hidden"><span class="t" style="left:2.00px;top:2px;font-size:12.5px;line-height:14px;transform:scaleX(0.8400);">Processed</span></div>
<div style="left:460px;top:625px;width:100px;height:18px;overflow:hidden"><span class="t" style="left:2.00px;top:2px;font-size:12.5px;line-height:14px;transform:scaleX(0.8800);">NEM 0.1 ng/ul</span></div>
<div style="left:561px;top:625px;width:100px;height:18px;overflow:hidden"><span class="t" style="left:2.60px;top:2px;font-size:12.5px;line-height:14px;transform:scaleX(0.8570);">0.102</span></div>
<div style="left:662px;top:625px;width:89px;height:18px;overflow:hidden"><span class="t" style="left:2.60px;top:2px;font-size:12.5px;line-height:14px;transform:scaleX(0.8570);">31974505</span></div>
<span class="t" style="left:30.98px;top:646px;font-size:12.5px;line-height:14px;transform:scaleX(0.9080);">10</span>
<div style="left:56px;top:644px;width:100px;height:18px;overflow:hidden"><span class="t" style="left:2.00px;top:2px;font-size:12.5px;line-height:14px;transform:scaleX(0.8260);">1,3-Dimethylamylamin (DMAA)</span></div>
<div style="left:157px;top:644px;width:100px;height:18px;overflow:hidden"><span class="t" style="left:2.60px;top:2px;font-size:12.5px;line-height:14px;transform:scaleX(0.8570);">4.71, 4.28</span></div>
<div style="left:258px;top:644px;width:100px;height:18px;overflow:hidden"><span class="t" style="left:2.00px;top:2px;font-size:12.5px;line-height:14px;transform:scaleX(0.8520);">Target Compound</span></div>
<div style="left:359px;top:644px;width:100px;height:18px;overflow:hidden"><span class="t" style="left:2.00px;top:2px;font-size:12.5px;line-height:14px;transform:scaleX(0.8400);">Processed</span></div>
<div style="left:460px;top:644px;width:100px;height:18px;overflow:hidden"><span class="t" style="left:2.00px;top:2px;font-size:12.5px;line-height:14px;transform:scaleX(0.8800);">NEM 0.15 ng/ul</span></div>
<div style="left:561px;top:644px;width:100px;height:18px;overflow:hidden"><span class="t" style="left:2.60px;top:2px;font-size:12.5px;line-height:14px;transform:scaleX(0.8570);">0.138</span></div>
<div style="left:662px;top:644px;width:89px;height:18px;overflow:hidden"><span class="t" style="left:2.60px;top:2px;font-size:12.5px;line-height:14px;transform:scaleX(0.8570);">42904552</span></div>
<span class="t" style="left:30.91px;top:665px;font-size:12.5px;line-height:14px;transform:scaleX(0.9870);">11</span>
<div style="left:56px;top:663px;width:100px;height:18px;overflow:hidden"><span class="t" style="left:2.00px;top:2px;font-size:12.5px;line-height:14px;transform:scaleX(0.8260);">1,3-Dimethylamylamin (DMAA)</span></div>
<div style="left:157px;top:663px;width:100px;height:18px;overflow:hidden"><span class="t" style="left:2.60px;top:2px;font-size:12.5px;line-height:14px;transform:scaleX(0.8570);">4.71, 4.28</span></div>
<div style="left:258px;top:663px;width:100px;height:18px;overflow:hidden"><span class="t" style="left:2.00px;top:2px;font-size:12.5px;line-height:14px;transform:scaleX(0.8520);">Target Compound</span></div>
<div style="left:359px;top:663px;width:100px;height:18px;overflow:hidden"><span class="t" style="left:2.00px;top:2px;font-size:12.5px;line-height:14px;transform:scaleX(0.8400);">Processed</span></div>
<div style="left:460px;top:663px;width:100px;height:18px;overflow:hidden"><span class="t" style="left:2.00px;top:2px;font-size:12.5px;line-height:14px;transform:scaleX(0.8260);">LSM</span></div>
<div style="left:561px;top:663px;width:100px;height:18px;overflow:hidden"><span class="t" style="left:2.60px;top:2px;font-size:12.5px;line-height:14px;transform:scaleX(0.8570);">-0.002</span></div>
<div style="left:662px;top:663px;width:89px;height:18px;overflow:hidden"><span class="t" style="left:2.60px;top:2px;font-size:12.5px;line-height:14px;transform:scaleX(0.8570);">45815</span></div>
<div style="left:23px;top:682px;width:32px;height:10px;overflow:hidden"><span class="t" style="left:7.98px;top:2px;font-size:12.5px;line-height:14px;transform:scaleX(0.9153);">12</span></div>
<div style="left:56px;top:682px;width:100px;height:10px;overflow:hidden"><span class="t" style="left:2.00px;top:2px;font-size:12.5px;line-height:14px;transform:scaleX(0.8260);">1,3-Dimethylamylamin (DMAA)</span></div>
<div style="left:157px;top:682px;width:100px;height:10px;overflow:hidden"><span class="t" style="left:2.60px;top:2px;font-size:12.5px;line-height:14px;transform:scaleX(0.8570);">4.71, 4.28</span></div>
<div style="left:258px;top:682px;width:100px;height:10px;overflow:hidden"><span class="t" style="left:2.00px;top:2px;font-size:12.5px;line-height:14px;transform:scaleX(0.8520);">Target Compound</span></div>
<div style="left:359px;top:682px;width:100px;height:10px;overflow:hidden"><span class="t" style="left:2.00px;top:2px;font-size:12.5px;line-height:14px;transform:scaleX(0.8400);">Processed</span></div>
<div style="left:460px;top:682px;width:100px;height:10px;overflow:hidden"><span class="t" style="left:2.00px;top:2px;font-size:12.5px;line-height:14px;transform:scaleX(0.8700);">Tee 2023 9500862 MU</span></div>
<div style="left:561px;top:682px;width:100px;height:10px;overflow:hidden"><span class="t" style="left:2.60px;top:2px;font-size:12.5px;line-height:14px;transform:scaleX(0.8570);">0.019</span></div>
<div style="left:662px;top:682px;width:89px;height:10px;overflow:hidden"><span class="t" style="left:2.60px;top:2px;font-size:12.5px;line-height:14px;transform:scaleX(0.8570);">6596962</span></div>
<span class="t" style="left:24.75px;top:716px;font-size:12.5px;line-height:14px;transform:scaleX(0.8278);">1,3-Dimethylamylamin (DMAA)</span>
<span class="t" style="left:177.45px;top:714px;font-size:12.5px;line-height:14px;transform:scaleX(0.8355);">1,3-Dimethylbutylamin (DMBA)</span>
<span class="t" style="left:331.90px;top:714px;font-size:12.5px;line-height:14px;transform:scaleX(0.8413);">2,4-Dinitrophenol (DNP)</span>
<span class="t" style="left:456.35px;top:714px;font-size:12.5px;line-height:14px;transform:scaleX(0.8299);">4-Aminobenzoesaeure</span>
<span class="t" style="left:572.90px;top:714px;font-size:12.5px;line-height:14px;transform:scaleX(0.8376);">Acetyl L Carnitin</span>
<span class="t" style="left:661.00px;top:714px;font-size:12.5px;line-height:14px;transform:scaleX(0.8306);">Aegeline</span>
<div style="left:710px;top:712px;width:31px;height:19px;overflow:hidden"><span class="t" style="left:4.10px;top:2px;font-size:12.5px;line-height:14px;transform:scaleX(0.8300);">Agmatin</span></div>
<span class="t" style="left:9.32px;top:752px;font-size:12px;line-height:14px;transform:scaleX(0.9764);">Excel Datei: D:\Beispieldaten\Thermo\MU an der NG.xlsx</span>
</div></body></html>
